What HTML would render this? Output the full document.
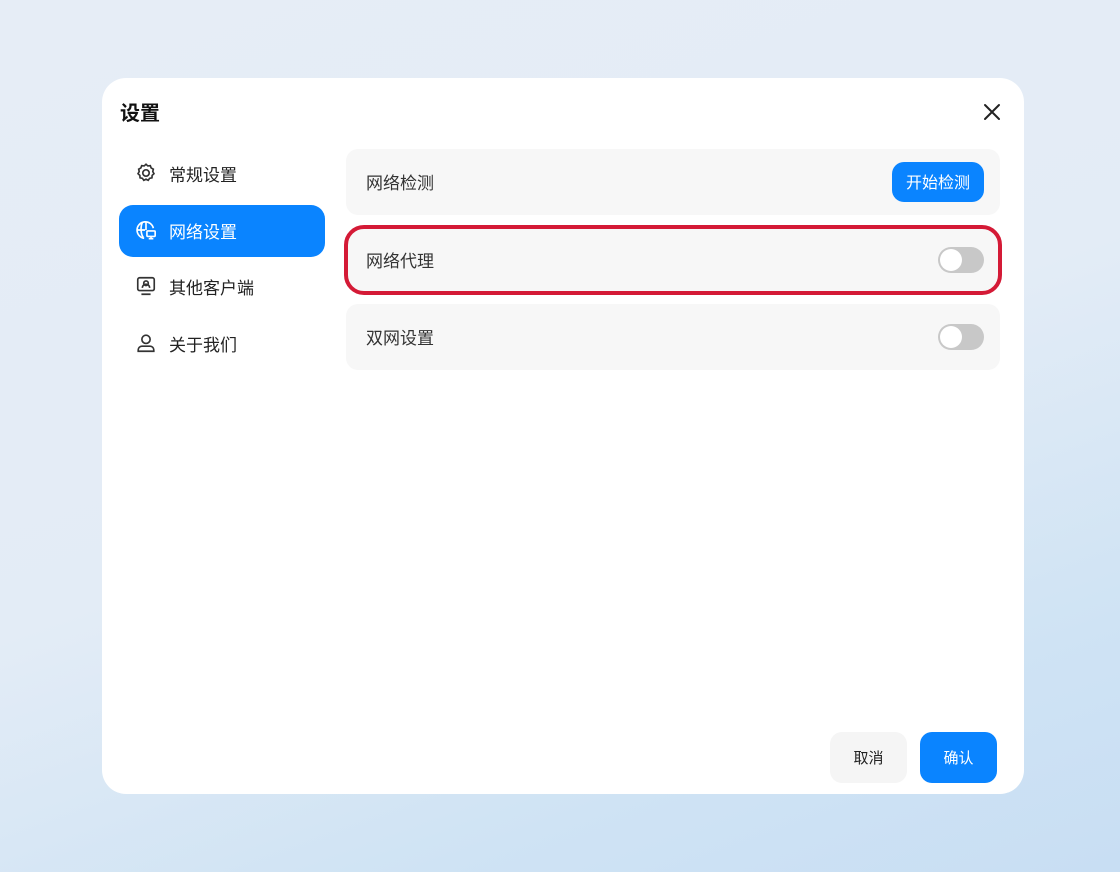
<!DOCTYPE html><html><head><meta charset="utf-8"><style>
*{margin:0;padding:0;box-sizing:border-box}
body{width:1120px;height:872px;overflow:hidden;font-family:"Liberation Sans","Noto Sans CJK SC",sans-serif;background:linear-gradient(160deg,#e6edf6 0%,#e3ecf6 50%,#cfe3f4 80%,#c8def3 100%);position:relative}
.dlg{position:absolute;left:102px;top:78px;width:922px;height:716px;background:#fff;border-radius:24px}
.t{position:absolute;left:18px;top:19px;font-size:20px;font-weight:bold;color:#111}
.x{position:absolute;left:880px;top:24px}
.nav{position:absolute;left:17px;width:206px;height:52px;border-radius:14px;display:flex;align-items:center;padding-left:16px;padding-bottom:2px;font-size:17px;color:#222}
.nav svg{margin-right:12px}
.nav.a{background:#0a84ff;color:#fff}
.row{position:absolute;left:244px;width:654px;height:66px;background:#f7f7f7;border-radius:12px;display:flex;align-items:center;padding-left:20px;padding-bottom:2px;font-size:17px;color:#333}
.tg{position:absolute;right:16px;top:20px;width:46px;height:26px;border-radius:13px;background:#c8c8c8}
.tg:after{content:"";position:absolute;left:2px;top:2px;width:22px;height:22px;border-radius:50%;background:#fff}
.btn{position:absolute;border-radius:12px;display:flex;align-items:center;justify-content:center;font-size:15px}
</style></head><body>
<div class="dlg">
<div class="t">设置</div>
<svg class="x" width="20" height="20" viewBox="0 0 20 20"><path d="M3 3L17 17M17 3L3 17" stroke="#222" stroke-width="2" stroke-linecap="round"/></svg>
<div class="nav" style="top:70px"><svg width="22" height="22" viewBox="0 0 24 24" fill="none" stroke="#333" stroke-width="1.8"><path d="M12 2.5l2 1.8 2.7-.3.9 2.5 2.4 1.3-.6 2.6 1.3 2.4-2 1.8-.2 2.7-2.6.5-1.5 2.2-2.4-1.2-2.4 1.2-1.5-2.2-2.6-.5-.2-2.7-2-1.8 1.3-2.4-.6-2.6 2.4-1.3.9-2.5 2.7.3z"/><circle cx="12" cy="12" r="3.5"/></svg>常规设置</div>
<div class="nav a" style="top:127px"><svg width="22" height="22" viewBox="0 0 24 24" fill="none" stroke="#fff" stroke-width="1.8"><path d="M20 10A9 9 0 1 0 10 21M3 12h8M12 3v9M8 4c-2 4-2 12 1 16"/><rect x="13" y="13" width="9" height="6" rx="1"/><path d="M17.5 19v2M15 21.5h5"/></svg>网络设置</div>
<div class="nav" style="top:183px"><svg width="22" height="22" viewBox="0 0 24 24" fill="none" stroke="#333" stroke-width="1.8"><rect x="3" y="3" width="18" height="14" rx="2"/><path d="M7 21h10M8 14a4 4 0 0 1 8 0M12 6.5a2.5 2.5 0 1 0 0 5 2.5 2.5 0 0 0 0-5z"/></svg>其他客户端</div>
<div class="nav" style="top:240px"><svg width="22" height="22" viewBox="0 0 24 24" fill="none" stroke="#333" stroke-width="1.8"><circle cx="12" cy="8" r="4.5"/><path d="M3.5 21v-1.5a4 4 0 0 1 4-4h9a4 4 0 0 1 4 4V21z"/></svg>关于我们</div>
<div class="row" style="top:71px">网络检测<div class="btn" style="right:16px;top:13px;width:92px;height:40px;background:#0a84ff;color:#fff;font-size:16px;padding-bottom:2px">开始检测</div></div>
<div class="row" style="top:149px;outline:4px solid #d41a36;outline-offset:-2px;border-radius:18px;">网络代理<div class="tg"></div></div>
<div class="row" style="top:226px">双网设置<div class="tg"></div></div>
<div class="btn" style="left:728px;top:654px;width:77px;height:51px;background:#f5f5f5;color:#222">取消</div>
<div class="btn" style="left:818px;top:654px;width:77px;height:51px;background:#0a84ff;color:#fff">确认</div>
</div>
</body></html>
